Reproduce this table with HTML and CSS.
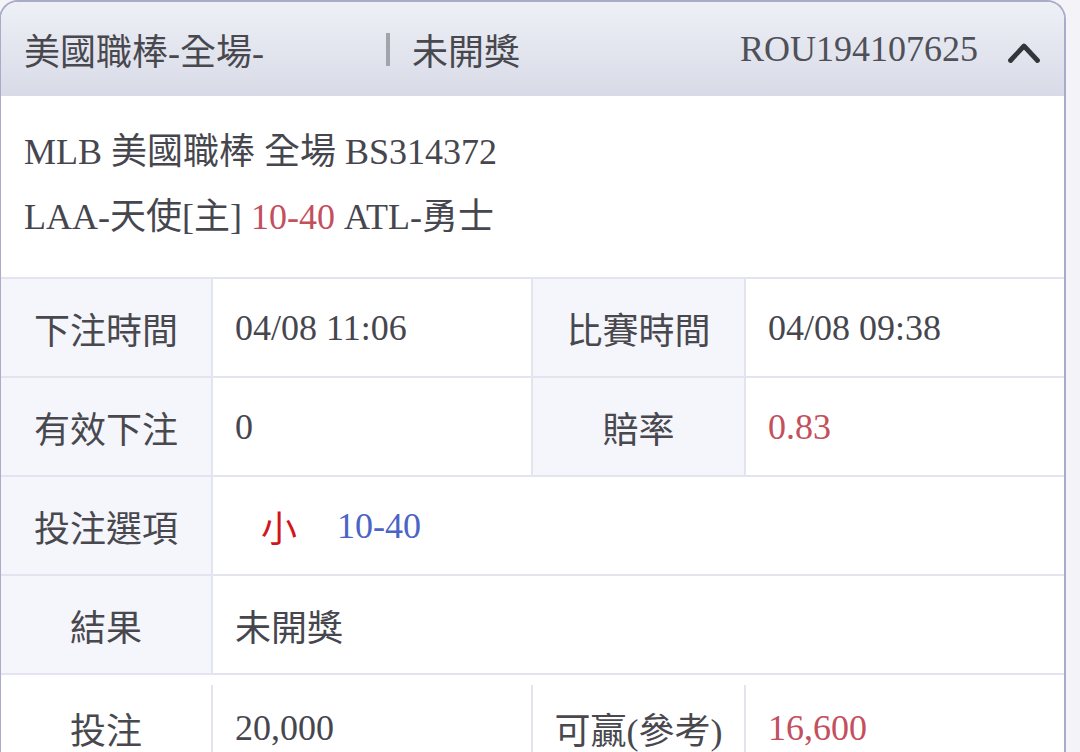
FILE: index.html
```html
<!DOCTYPE html>
<html lang="zh-Hant">
<head>
<meta charset="utf-8">
<title>注單</title>
<link rel="stylesheet" href="styles.css">
</head>
<body>
<div class="card">
  <div class="card-head">
    <span class="title">美國職棒-全場-</span>
    <span class="sep"></span>
    <span class="status">未開獎</span>
    <span class="spacer"></span>
    <span class="order">ROU194107625</span>
    <svg class="chev" width="36" height="26" viewBox="0 0 36 26"><path d="M4.5 21.5 L18 7 L31.5 21.5" fill="none" stroke="#34353a" stroke-width="4.8" stroke-linecap="round" stroke-linejoin="round"/></svg>
  </div>
  <div class="info">
    <div class="line">MLB 美國職棒 全場 BS314372</div>
    <div class="line">LAA-天使[主] <span class="red">10-40</span> ATL-勇士</div>
  </div>
  <div class="grid">
    <div class="lab">下注時間</div>
    <div class="val">04/08 11:06</div>
    <div class="lab">比賽時間</div>
    <div class="val">04/08 09:38</div>

    <div class="lab">有效下注</div>
    <div class="val">0</div>
    <div class="lab">賠率</div>
    <div class="val"><span class="red">0.83</span></div>

    <div class="lab">投注選項</div>
    <div class="val wide"><span class="pick">小</span><span class="blue">10-40</span></div>

    <div class="lab">結果</div>
    <div class="val wide">未開獎</div>
  </div>
  <div class="last">
    <div class="grid grid-last">
      <div class="lab plain">投注</div>
      <div class="val">20,000</div>
      <div class="lab plain">可贏(參考)</div>
      <div class="val"><span class="red">16,600</span></div>
    </div>
  </div>
</div>
</body>
</html>
```

FILE: styles.css
```css
* { box-sizing: border-box; }
html, body {
  margin: 0;
  padding: 0;
  background: #f4f4f8;
  height: 752px;
  overflow: hidden;
}
body {
  font-family: "Liberation Serif", "Noto Sans CJK TC", serif;
  font-size: 36px;
  color: #46464e;
}
.card {
  width: 1067px;
  margin-left: -1px;
  border: 2px solid #a9abcb;
  border-bottom: none;
  border-radius: 19px 19px 0 0;
  overflow: hidden;
  background: #fff;
}
.card-head {
  height: 94px;
  display: flex;
  align-items: center;
  padding: 0 22px 0 23px;
  background: linear-gradient(to bottom, #eef0f6, #d8dbe7);
}
.title {
  flex: 0 0 362px;
  color: #48484e;
}
.sep {
  width: 4px;
  height: 33px;
  background: #a3a4ab;
}
.status {
  margin-left: 22px;
  color: #48484e;
}
.spacer { flex: 1; }
.order { color: #505058; }
.chev {
  margin-left: 28px;
  margin-top: 6px;
}
.info {
  padding: 24px 24px 27px 23px;
  line-height: 65px;
}
.red { color: #c44f5d; }
.blue { color: #4b64c6; }
.pick {
  color: #d0161d;
  margin: 0 40px 0 26px;
}
.grid {
  display: grid;
  grid-template-columns: 210px 318px 211px 1fr;
  grid-auto-rows: 97px;
  gap: 2px;
  background: #e3e4f0;
  border-top: 2px solid #e3e4f0;
}
.lab {
  display: flex;
  align-items: center;
  justify-content: center;
  background: #f5f6fb;
  color: #48484e;
}
.val {
  display: flex;
  align-items: center;
  padding-left: 22px;
  background: #fff;
}
.wide { grid-column: span 3; }
.last {
  border-top: 2px solid #e3e4f0;
  padding-top: 10px;
  background: #fff;
}
.grid-last {
  border-top: none;
  grid-auto-rows: 86px;
}
.plain { background: #fff; }
```
